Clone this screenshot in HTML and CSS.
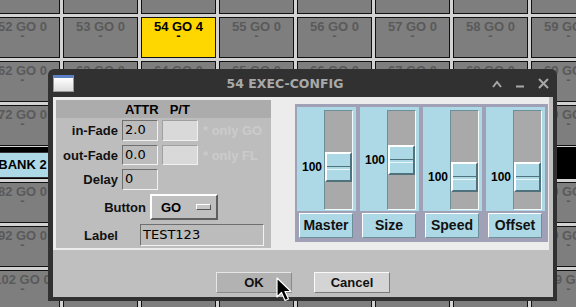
FILE: index.html
```html
<!DOCTYPE html>
<html lang="en">
<head>
    <meta charset="UTF-8">
    <meta name="viewport" content="width=device-width, initial-scale=1.0">
    <title>Exec Config</title>
    <link rel="stylesheet" href="styles.css">
</head>
<body>
    <div class="desk-clip">
        <div class="desk" id="desk"></div>
    </div>

    <div class="window">
        <div class="titlebar">
            <span class="win-icon"></span>
            <span class="win-title">54 EXEC-CONFIG</span>
            <span class="win-btns">
                <svg width="10" height="8" viewBox="0 0 10 8"><path d="M1 7 L5 2 L9 7" fill="none" stroke="#a9a9a9" stroke-width="2"/></svg>
                <svg width="10" height="8" viewBox="0 0 10 8"><path d="M1 6.5 H9" stroke="#a9a9a9" stroke-width="2"/></svg>
                <svg width="11" height="11" viewBox="0 0 11 11"><path d="M1 1 L10 10 M10 1 L1 10" stroke="#a9a9a9" stroke-width="2"/></svg>
            </span>
        </div>
        <div class="win-body">
            <div class="win-top">
                <div class="attr-panel">
                    <div class="attr-head"><span>ATTR</span><span>P/T</span></div>
                    <div class="attr-rows">
                        <div class="row row-a">
                            <span class="lbl">in-Fade</span>
                            <span class="field">2.0</span>
                            <span class="field off"></span>
                            <span class="hint">* only GO</span>
                        </div>
                        <div class="row row-b">
                            <span class="lbl">out-Fade</span>
                            <span class="field">0.0</span>
                            <span class="field off"></span>
                            <span class="hint">* only FL</span>
                        </div>
                        <div class="row row-c">
                            <span class="lbl">Delay</span>
                            <span class="field">0</span>
                        </div>
                        <div class="row row-d">
                            <span class="lbl wide">Button</span>
                            <span class="dropdown">GO <i class="drop-mark"></i></span>
                        </div>
                        <div class="row row-e">
                            <span class="lbl">Label</span>
                            <span class="field long">TEST123</span>
                        </div>
                    </div>
                </div>

                <div class="faders">
                    <div class="fader">
                        <div class="fader-box">
                            <div class="track"></div>
                            <div class="knob-row" style="top: 45px"><span class="val">100</span><span class="knob"></span></div>
                        </div>
                        <div class="fader-name">Master</div>
                    </div>
                    <div class="fader">
                        <div class="fader-box">
                            <div class="track"></div>
                            <div class="knob-row" style="top: 38px"><span class="val">100</span><span class="knob"></span></div>
                        </div>
                        <div class="fader-name">Size</div>
                    </div>
                    <div class="fader">
                        <div class="fader-box">
                            <div class="track"></div>
                            <div class="knob-row" style="top: 55px"><span class="val">100</span><span class="knob"></span></div>
                        </div>
                        <div class="fader-name">Speed</div>
                    </div>
                    <div class="fader">
                        <div class="fader-box">
                            <div class="track"></div>
                            <div class="knob-row" style="top: 55px"><span class="val">100</span><span class="knob"></span></div>
                        </div>
                        <div class="fader-name">Offset</div>
                    </div>
                </div>
            </div>
            <div class="win-actions">
                <button class="btn pressed">OK</button>
                <button class="btn">Cancel</button>
            </div>
        </div>
    </div>

    <svg class="cursor" width="17" height="25" viewBox="0 0 17 25">
        <path d="M1 1 L1 20 L5.5 15.5 L9 23.5 L12.5 22 L9 14.5 L15 14.5 Z" fill="#000" stroke="#fff" stroke-width="1.2" stroke-linejoin="round"/>
    </svg>

    <script>
        const desk = document.getElementById('desk');
        const rows = [4, 5, 6, 7, 'bank', 8, 9, 10];

        rows.forEach((r) => {
            if (r === 'bank') {
                const bank = document.createElement('div');
                bank.className = 'bank';
                bank.innerHTML = '<div class="bank-cell">BANK 2</div>';
                desk.appendChild(bank);
                return;
            }
            for (let c = 2; c <= 9; c++) {
                const n = r * 10 + c;
                const cell = document.createElement('div');
                cell.className = 'cell';
                let go = 0;
                if (n === 54) {
                    cell.classList.add('active');
                    go = 4;
                }
                cell.innerHTML = '<b>' + n + ' GO ' + go + '</b><span>-</span>';
                desk.appendChild(cell);
            }
        });
    </script>
</body>
</html>
```

FILE: styles.css
```css
* {
    margin: 0;
    padding: 0;
    box-sizing: border-box;
}

html {
    overflow: hidden;
}

body {
    width: 576px;
    height: 307px;
    overflow: hidden;
    position: relative;
    background: #d2d2d2;
    font-family: "Liberation Sans", Arial, sans-serif;
    font-size: 13px;
    font-weight: bold;
}

/* background executor grid */
.desk-clip {
    width: 576px;
    height: 307px;
    overflow: hidden;
}

.desk {
    display: grid;
    grid-template-columns: repeat(8, 75px);
    grid-template-rows: 41px 41px 41px 41px 30px 41px 41px 41px;
    gap: 3px;
    margin: -27px 0 0 -15px;
}

.cell {
    background: #7e7e7e;
    border: 1px solid #111;
    color: #5a5a5a;
    text-align: center;
    padding-top: 1px;
    line-height: 15px;
}

.cell b,
.cell span {
    display: block;
}

.cell span {
    line-height: 6px;
    margin-top: -1px;
}

.cell.active {
    background: #ffd700;
    color: #000;
}

.bank {
    grid-column: 1 / -1;
    margin-top: -2px;
    background: #000;
    padding: 5px 0 1px;
}

.bank-cell {
    width: 75px;
    height: 26px;
    background: #add8e6;
    border: 1px solid #333;
    color: #000;
    text-align: center;
    line-height: 24px;
}

/* window */
.window {
    position: absolute;
    left: 48px;
    top: 69px;
    width: 509px;
    height: 232px;
    background: #313131;
    border-radius: 6px 6px 0 0;
    padding: 0 4px 4px 5px;
    display: flex;
    flex-direction: column;
}

.titlebar {
    height: 28px;
    display: flex;
    align-items: center;
}

.win-icon {
    width: 21px;
    height: 17px;
    background: linear-gradient(#ffffff, #dcdcdc);
    border: 1px solid #9a9a9a;
    border-top: 3px solid #5b80c4;
    margin-top: 1px;
}

.win-title {
    flex: 1;
    text-align: center;
    font-family: "DejaVu Sans", sans-serif;
    font-size: 12.5px;
    color: #a9a9a9;
    padding-left: 4px;
}

.win-btns {
    display: flex;
    align-items: center;
    gap: 13px;
    padding-right: 4px;
    margin-top: 1px;
}

.win-body {
    flex: 1;
    background: #bfbfbf;
    display: flex;
    flex-direction: column;
}

.win-top {
    height: 153px;
    margin-right: 4px;
    background: #ececec;
    display: flex;
    align-items: flex-start;
    padding-left: 3px;
}

/* attribute panel */
.attr-panel {
    margin-top: 3px;
    width: 215px;
    height: 148px;
    background: #bdbdbd;
}

.attr-head {
    height: 18px;
    background: #acacac;
    display: flex;
    gap: 11px;
    padding-left: 69px;
    align-items: center;
}

.attr-rows {
    padding: 2px 4px 0;
    display: flex;
    flex-direction: column;
    gap: 4px;
}

.row {
    display: flex;
    align-items: center;
    gap: 4px;
}

.row-a { height: 21px; }
.row-b { height: 20px; }
.row-c { height: 21px; }
.row-d { height: 26px; }
.row-e { height: 22px; }

.lbl {
    width: 58px;
    text-align: right;
    color: #111;
}

.lbl.wide {
    width: 86px;
}

.field {
    width: 36px;
    height: 100%;
    background: #bcbcbc;
    border: 1px solid #f2f2f2;
    border-top-color: #6f6f6f;
    border-left-color: #6f6f6f;
    font-family: "DejaVu Sans", sans-serif;
    font-weight: normal;
    color: #000;
    padding-left: 2px;
    line-height: 18px;
}

.field.off {
    background: #d9d9d9;
    border-color: #f0f0f0;
    border-top-color: #a0a0a0;
    border-left-color: #a0a0a0;
}

.field.long {
    width: 124px;
    margin-left: 18px;
    line-height: 20px;
}

.hint {
    color: #cbcbcb;
    padding-left: 1px;
}

.dropdown {
    width: 68px;
    height: 100%;
    background: #bfbfbf;
    border: 2px solid #5e5e5e;
    border-top-color: #fff;
    border-left-color: #fff;
    display: flex;
    align-items: center;
    padding-left: 9px;
    color: #000;
}

.drop-mark {
    width: 15px;
    height: 6px;
    margin-left: 15px;
    background: #c6c6c6;
    border: 1px solid #555;
    border-top-color: #fff;
    border-left-color: #fff;
}

/* faders */
.faders {
    margin: 7px 0 0 24px;
    width: 253px;
    background: #a0a0b6;
    padding: 3px 3px 4px 2px;
    display: grid;
    grid-template-columns: repeat(4, 1fr);
    gap: 4px;
}

.fader-box {
    position: relative;
    height: 104px;
    background: #add8e6;
    display: flex;
    justify-content: flex-end;
    padding: 3px 3px 1px 0;
}

.track {
    width: 29px;
    height: 100%;
    background: #a9a9a9;
    border: 1px solid #f4fbfd;
    border-top-color: #6d8f99;
    border-left-color: #6d8f99;
}

.knob-row {
    position: absolute;
    left: 0;
    right: 4px;
    height: 30px;
    display: flex;
    align-items: center;
}

.val {
    flex: 1;
    padding-left: 5px;
    font-size: 12px;
    color: #000;
}

.knob {
    position: relative;
    width: 27px;
    height: 30px;
    background: #add8e6;
    border: 2px solid #4f727d;
    border-top-color: #fff;
    border-left-color: #fff;
}

.knob::after {
    content: "";
    position: absolute;
    left: 0;
    right: 0;
    top: 12px;
    height: 2px;
    border-top: 1px solid #4f727d;
    border-bottom: 1px solid #e8f6fa;
}

.fader-name {
    margin: 2px 3px 0 2px;
    height: 25px;
    background: #add8e6;
    border: 1px solid #6d8f99;
    border-top-color: #fff;
    border-left-color: #fff;
    text-align: center;
    line-height: 23px;
    font-size: 14px;
    color: #111;
}

/* bottom buttons */
.win-actions {
    flex: 1;
    display: flex;
    justify-content: center;
    gap: 22px;
    padding-top: 22px;
}

.btn {
    width: 76px;
    height: 21px;
    font-family: "Liberation Sans", Arial, sans-serif;
    font-size: 13px;
    font-weight: bold;
    color: #111;
    background: #d4d4d4;
    border: 1px solid #7a7a7a;
    border-top-color: #fafafa;
    border-left-color: #fafafa;
}

.btn.pressed {
    background: #b2b2b2;
    border-color: #e6e6e6;
    border-right-color: #8a8a8a;
    border-bottom-color: #8a8a8a;
}

.cursor {
    position: absolute;
    left: 276px;
    top: 277px;
}
```
